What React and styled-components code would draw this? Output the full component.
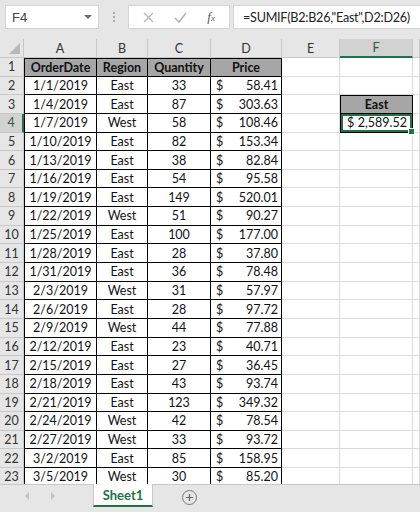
import React from "react";
import styled, { createGlobalStyle } from "styled-components";

const GlobalStyle = createGlobalStyle`
  html, body { margin: 0; padding: 0; background: #ffffff; }
  body { font-family: Lato, "Open Sans", sans-serif; overflow: hidden; }
`;

const COLS = "24px 73px 51px 63px 71px 58px 73px 1fr";
const GREEN = "#217346";

const Sheet = styled.div`
  width: 420px;
  height: 512px;
  display: flex;
  flex-direction: column;
  background: #fff;
  overflow: hidden;
`;

const FormulaBar = styled.div`
  height: 39px;
  flex-shrink: 0;
  background: #e6e6e6;
  display: flex;
  align-items: flex-start;
  padding-top: 5px;
  box-sizing: border-box;
`;

const NameBox = styled.div`
  flex-shrink: 0;
  margin-left: 5px;
  width: 94px;
  height: 24px;
  box-sizing: border-box;
  background: #fff;
  border: 1px solid #d4d4d4;
  display: flex;
  align-items: center;
  justify-content: space-between;
  padding: 0 6px 0 6px;
  font-family: "Liberation Sans", sans-serif;
  font-size: 13px;
  color: #444;
`;

const Caret = styled.span`
  width: 0;
  height: 0;
  border-left: 4px solid transparent;
  border-right: 4px solid transparent;
  border-top: 4px solid #6a6a6a;
`;

const Grip = styled.div`
  flex-shrink: 0;
  width: 29px;
  height: 24px;
  display: flex;
  flex-direction: column;
  align-items: center;
  justify-content: center;
  gap: 2px;
  span {
    width: 2px;
    height: 2px;
    background: #a8a8a8;
  }
`;

const ButtonBox = styled.div`
  flex-shrink: 0;
  width: 102px;
  height: 24px;
  box-sizing: border-box;
  background: #fff;
  border: 1px solid #d4d4d4;
  display: flex;
  align-items: center;
  justify-content: space-around;
  padding: 0 4px;
  color: #b0b0b0;
`;

const Fx = styled.span`
  font-family: "Liberation Serif", serif;
  font-style: italic;
  font-size: 13px;
  color: #555;
  sub { font-size: 9px; vertical-align: baseline; }
`;

const FormulaInput = styled.div`
  margin-left: 3px;
  flex: 1;
  min-width: 0;
  overflow: hidden;
  height: 24px;
  box-sizing: border-box;
  background: #fff;
  border: 1px solid #d4d4d4;
  border-right: none;
  display: flex;
  align-items: center;
  padding-left: 9px;
  font-family: Lato, sans-serif;
  font-size: 12.6px;
  letter-spacing: -0.25px;
  color: #222;
  white-space: nowrap;
`;

const Row = styled.div`
  display: grid;
  grid-template-columns: ${COLS};
  height: ${(p) => p.$h || "18.65px"};
  flex-shrink: 0;
`;

const ColHead = styled.div`
  background: ${(p) => (p.$active ? "#d2d2d2" : "#e6e6e6")};
  border-right: 1px solid #c8c8c8;
  border-bottom: ${(p) => (p.$active ? `2px solid ${GREEN}` : "1px solid #c8c8c8")};
  box-sizing: border-box;
  display: flex;
  align-items: center;
  justify-content: center;
  font-size: 12.5px;
  color: ${(p) => (p.$active ? "#2a5d3e" : "#333")};
`;

const Corner = styled.div`
  background: #e6e6e6;
  border-right: 1px solid #c8c8c8;
  border-bottom: 1px solid #c8c8c8;
  box-sizing: border-box;
  position: relative;
  &::after {
    content: "";
    position: absolute;
    right: 3px;
    bottom: 3px;
    width: 0;
    height: 0;
    border-left: 11px solid transparent;
    border-bottom: 11px solid #b8b8b8;
  }
`;

const RowHead = styled.div`
  background: ${(p) => (p.$active ? "#d2d2d2" : "#e6e6e6")};
  border-right: ${(p) => (p.$active ? `2px solid ${GREEN}` : "1px solid #c8c8c8")};
  border-bottom: 1px solid #c8c8c8;
  box-sizing: border-box;
  display: flex;
  align-items: center;
  justify-content: center;
  font-size: 12.5px;
  color: ${(p) => (p.$active ? "#2a5d3e" : "#333")};
`;

const Cell = styled.div`
  box-sizing: border-box;
  border-right: 1px solid ${(p) => (p.$table ? "#000" : "#dadada")};
  border-bottom: 1px solid ${(p) => (p.$table ? "#000" : "#dadada")};
  border-top: ${(p) => (p.$top ? "1px solid #000" : "none")};
  border-left: ${(p) => (p.$left ? "1px solid #000" : "none")};
  background: ${(p) => (p.$head ? "#a6a6a6" : "#fff")};
  font-weight: ${(p) => (p.$head ? 700 : 400)};
  font-size: 12.5px;
  color: #111;
  display: flex;
  align-items: center;
  justify-content: ${(p) => p.$align || "center"};
  padding: 0 2px;
  white-space: nowrap;
  overflow: visible;
  position: relative;
  ${(p) =>
    p.$selected &&
    `
    box-shadow: inset 0 0 0 2px ${GREEN};
    &::after {
      content: "";
      position: absolute;
      right: -3px;
      bottom: -3px;
      width: 5px;
      height: 5px;
      background: ${GREEN};
      border: 1px solid #fff;
      z-index: 2;
    }
  `}
`;

const Money = styled.div`
  flex: 1;
  display: flex;
  justify-content: space-between;
  padding: ${(p) => p.$pad || "0 1px 0 3px"};
`;

const Grid = styled.div`
  flex: 1;
  overflow: hidden;
  display: flex;
  flex-direction: column;
`;

const TabBar = styled.div`
  height: 28px;
  flex-shrink: 0;
  background: #e6e6e6;
  border-top: 1px solid #c8c8c8;
  box-sizing: border-box;
  display: flex;
  align-items: flex-start;
`;

const Arrows = styled.div`
  width: 93px;
  height: 22px;
  display: flex;
  align-items: center;
  padding-left: 25px;
  gap: 22px;
  box-sizing: border-box;
`;

const Arrow = styled.span`
  width: 0;
  height: 0;
  border-top: 4px solid transparent;
  border-bottom: 4px solid transparent;
  ${(p) => (p.$left ? "border-right" : "border-left")}: 4px solid #c4c4c4;
`;

const Tab = styled.div`
  width: 60px;
  height: 23px;
  margin-top: -1px;
  background: #fff;
  border-left: 1px solid #c8c8c8;
  border-right: 1px solid #c8c8c8;
  border-bottom: 2px solid ${GREEN};
  box-sizing: border-box;
  display: flex;
  align-items: center;
  justify-content: center;
  font-weight: 700;
  font-size: 13px;
  color: ${GREEN};
`;

const AddSheet = styled.div`
  margin-left: 29px;
  margin-top: 5px;
  width: 13px;
  height: 13px;
  border: 1px solid #777;
  border-radius: 50%;
  display: flex;
  align-items: center;
  justify-content: center;
  color: #666;
`;

const data = [
  ["1/1/2019", "East", 33, "58.41"],
  ["1/4/2019", "East", 87, "303.63"],
  ["1/7/2019", "West", 58, "108.46"],
  ["1/10/2019", "East", 82, "153.34"],
  ["1/13/2019", "East", 38, "82.84"],
  ["1/16/2019", "East", 54, "95.58"],
  ["1/19/2019", "East", 149, "520.01"],
  ["1/22/2019", "West", 51, "90.27"],
  ["1/25/2019", "East", 100, "177.00"],
  ["1/28/2019", "East", 28, "37.80"],
  ["1/31/2019", "East", 36, "78.48"],
  ["2/3/2019", "West", 31, "57.97"],
  ["2/6/2019", "East", 28, "97.72"],
  ["2/9/2019", "West", 44, "77.88"],
  ["2/12/2019", "East", 23, "40.71"],
  ["2/15/2019", "East", 27, "36.45"],
  ["2/18/2019", "East", 43, "93.74"],
  ["2/21/2019", "East", 123, "349.32"],
  ["2/24/2019", "West", 42, "78.54"],
  ["2/27/2019", "West", 33, "93.72"],
  ["3/2/2019", "East", 85, "158.95"],
  ["3/5/2019", "West", 30, "85.20"],
];

const Price = ({ value, pad }) => (
  <Money $pad={pad}>
    <span>$</span>
    <span>{value}</span>
  </Money>
);

const extraCols = (rowNum) => {
  if (rowNum === 3)
    return [
      <Cell key="e" />,
      <Cell key="f" $table $head $top $left>East</Cell>,
      <Cell key="g" />,
    ];
  if (rowNum === 4)
    return [
      <Cell key="e" />,
      <Cell key="f" $table $left $selected>
        <Price value="2,589.52" pad="0 3px 0 4px" />
      </Cell>,
      <Cell key="g" />,
    ];
  return [<Cell key="e" />, <Cell key="f" />, <Cell key="g" />];
};

export default function App() {
  return (
    <Sheet>
      <GlobalStyle />
      <FormulaBar>
        <NameBox>
          <span>F4</span>
          <Caret />
        </NameBox>
        <Grip>
          <span />
          <span />
          <span />
        </Grip>
        <ButtonBox>
          <svg width="11" height="11" viewBox="0 0 11 11">
            <path d="M1 1L10 10M10 1L1 10" stroke="#b4b4b4" strokeWidth="1.3" />
          </svg>
          <svg width="13" height="11" viewBox="0 0 13 11">
            <path d="M1 6L5 10L12 1" stroke="#b4b4b4" strokeWidth="1.5" fill="none" />
          </svg>
          <Fx>
            f<sub>x</sub>
          </Fx>
        </ButtonBox>
        <FormulaInput>=SUMIF(B2:B26,"East",D2:D26)</FormulaInput>
      </FormulaBar>

      <Grid>
        <Row $h="19px">
          <Corner />
          {["A", "B", "C", "D", "E", "F"].map((c) => (
            <ColHead key={c} $active={c === "F"}>
              {c}
            </ColHead>
          ))}
          <ColHead />
        </Row>

        <Row>
          <RowHead>1</RowHead>
          <Cell $table $head $top $left>OrderDate</Cell>
          <Cell $table $head $top>Region</Cell>
          <Cell $table $head $top>Quantity</Cell>
          <Cell $table $head $top>Price</Cell>
          {extraCols(1)}
        </Row>

        {data.map((r, i) => {
          const n = i + 2;
          return (
            <Row key={n}>
              <RowHead $active={n === 4}>{n}</RowHead>
              <Cell $table $left>{r[0]}</Cell>
              <Cell $table>{r[1]}</Cell>
              <Cell $table>{r[2]}</Cell>
              <Cell $table>
                <Price value={r[3]} />
              </Cell>
              {extraCols(n)}
            </Row>
          );
        })}
      </Grid>

      <TabBar>
        <Arrows>
          <Arrow $left />
          <Arrow />
        </Arrows>
        <Tab>Sheet1</Tab>
        <AddSheet>
          <svg width="9" height="9" viewBox="0 0 9 9">
            <path d="M4.5 1V8M1 4.5H8" stroke="#666" strokeWidth="1.2" />
          </svg>
        </AddSheet>
      </TabBar>
    </Sheet>
  );
}
